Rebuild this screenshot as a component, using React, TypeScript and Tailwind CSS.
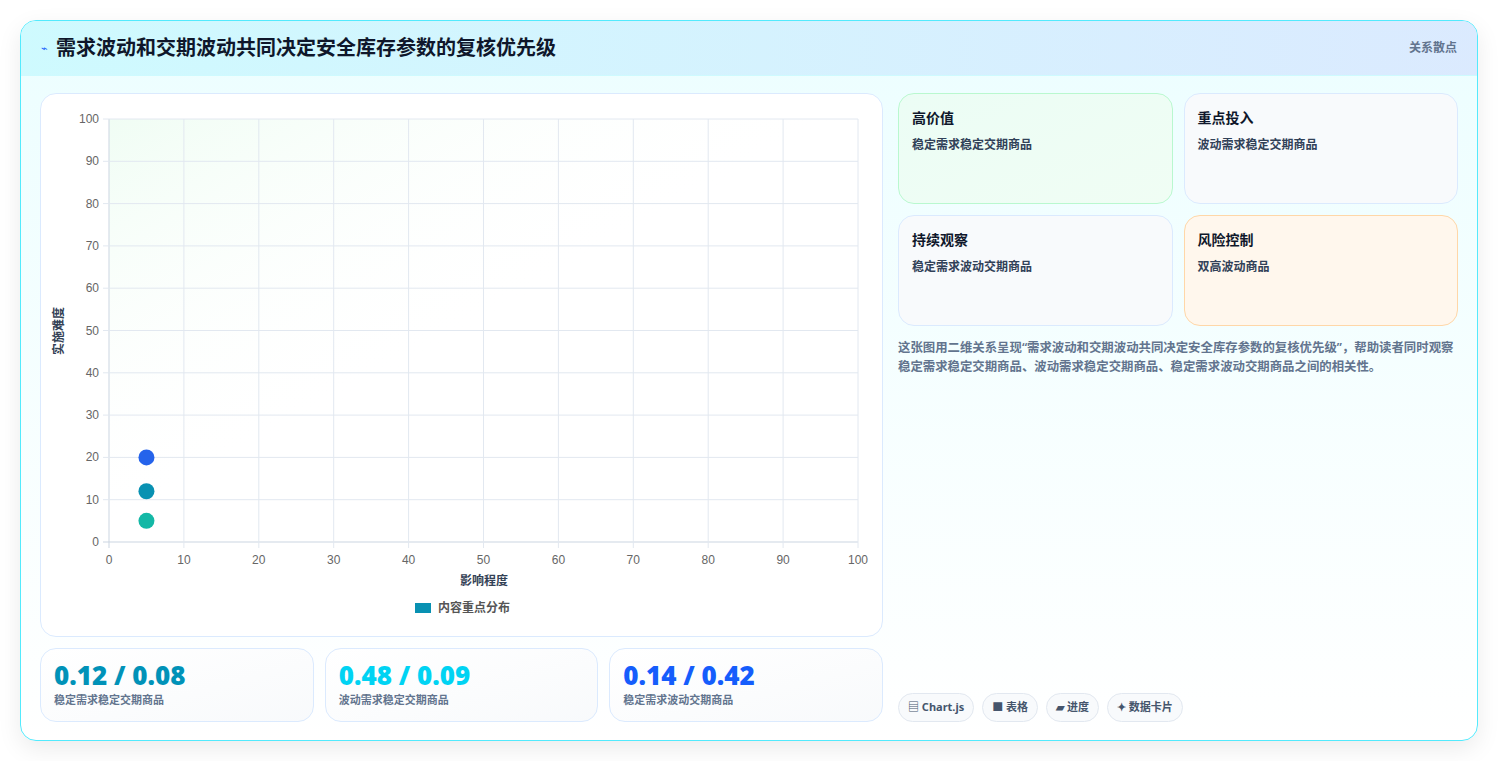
import React from "react";

const font = { fontFamily: '"Noto Sans", "Noto Sans CJK SC", sans-serif' };

function Chart() {
  const x0 = 68, x1 = 817, yTop = 25, yBot = 448;
  const sx = (v: number) => x0 + ((x1 - x0) * v) / 100;
  const sy = (v: number) => yBot - ((yBot - yTop) * v) / 100;
  const ticks = [0, 10, 20, 30, 40, 50, 60, 70, 80, 90, 100];
  const pts = [
    { y: 20, c: "#2563eb" },
    { y: 12, c: "#0891b2" },
    { y: 5, c: "#14b8a6" },
  ];
  return (
    <svg width="842" height="541" className="block">
      <defs>
        <linearGradient id="g" x1="0" y1="0" x2="1" y2="1">
          <stop offset="0" stopColor="#f0fdf4" />
          <stop offset="0.5" stopColor="#ffffff" stopOpacity="0" />
        </linearGradient>
      </defs>
      <rect x={x0} y={yTop} width={x1 - x0} height={yBot - yTop} fill="url(#g)" />
      {ticks.map((t) => (
        <g key={t}>
          <line x1={sx(t)} x2={sx(t)} y1={yTop} y2={yBot + 6} stroke={t === 0 ? "#cbd5e1" : "#e2e8f0"} />
          <line x1={x0 - 6} x2={x1} y1={sy(t)} y2={sy(t)} stroke={t === 0 ? "#cbd5e1" : "#e2e8f0"} />
          <text x={sx(t)} y={yBot + 22} fontSize="12" fill="#666" textAnchor="middle" fontFamily="Liberation Sans, sans-serif">{t}</text>
          <text x={x0 - 10} y={sy(t) + 4} fontSize="12" fill="#666" textAnchor="end" fontFamily="Liberation Sans, sans-serif">{t}</text>
        </g>
      ))}
      {pts.map((p, i) => (
        <circle key={i} cx={sx(5)} cy={sy(p.y)} r="8" fill={p.c} />
      ))}
      <text x="22" y="237" fontSize="12" fontWeight="700" fill="#334155" textAnchor="middle" transform="rotate(-90 22 237)" style={font}>实施难度</text>
      <text x="443" y="491" fontSize="12" fontWeight="700" fill="#334155" textAnchor="middle" style={font}>影响程度</text>
      <rect x="374" y="509" width="16" height="10" fill="#0891b2" />
      <text x="397" y="518" fontSize="12" fontWeight="700" fill="#555" style={font}>内容重点分布</text>
    </svg>
  );
}

function Quad({ title, sub, cls }: { title: string; sub: string; cls: string }) {
  return (
    <div className={`h-[111px] rounded-2xl border px-[13px] pt-[13px] ${cls}`}>
      <div className="text-[14px] font-bold text-slate-900">{title}</div>
      <div className="mt-[8px] text-[12px] font-semibold text-slate-700">{sub}</div>
    </div>
  );
}

function Stat({ v, label, color }: { v: string; label: string; color: string }) {
  return (
    <div className="h-[74px] rounded-2xl border border-blue-100 bg-gradient-to-br from-white to-slate-50 px-[13px] pt-[9px]">
      <div className={`text-[26px] font-black leading-[34px] ${color}`}>{v}</div>
      <div className="text-[11px] font-semibold text-slate-500">{label}</div>
    </div>
  );
}

export default function App() {
  return (
    <div className="min-h-screen bg-white px-[20px] pt-[20px]" style={font}>
      <div className="overflow-hidden rounded-2xl border border-cyan-300 bg-gradient-to-b from-cyan-50 to-white shadow-[0_8px_24px_rgba(0,0,0,0.08)]">
        <div className="flex h-[55px] items-center justify-between border-b border-cyan-100 bg-gradient-to-r from-cyan-100 to-blue-100 px-[20px]">
          <div className="flex items-center gap-[8px]">
            <span className="text-[11px] text-blue-600">⌁</span>
            <h1 className="text-[20px] font-bold text-slate-900">需求波动和交期波动共同决定安全库存参数的复核优先级</h1>
          </div>
          <span className="text-[12px] font-semibold text-slate-500">关系散点</span>
        </div>
        <div className="flex gap-[15px] px-[19px] pb-[18px] pt-[17px]">
          <div className="flex w-[843px] flex-col gap-[11px]">
            <div className="h-[544px] rounded-2xl border border-blue-100 bg-white">
              <Chart />
            </div>
            <div className="grid grid-cols-3 gap-[11px]">
              <Stat v="0.12 / 0.08" label="稳定需求稳定交期商品" color="text-cyan-600" />
              <Stat v="0.48 / 0.09" label="波动需求稳定交期商品" color="text-cyan-400" />
              <Stat v="0.14 / 0.42" label="稳定需求波动交期商品" color="text-blue-600" />
            </div>
          </div>
          <div className="flex flex-1 flex-col">
            <div className="grid grid-cols-2 gap-[11px]">
              <Quad title="高价值" sub="稳定需求稳定交期商品" cls="border-green-200 bg-gradient-to-br from-emerald-50 to-green-50" />
              <Quad title="重点投入" sub="波动需求稳定交期商品" cls="border-blue-100 bg-slate-50" />
              <Quad title="持续观察" sub="稳定需求波动交期商品" cls="border-blue-100 bg-slate-50" />
              <Quad title="风险控制" sub="双高波动商品" cls="border-orange-200 bg-orange-50" />
            </div>
            <p className="mt-[12px] text-[12.4px] font-semibold leading-[19px] text-slate-500">
              这张图用二维关系呈现“需求波动和交期波动共同决定安全库存参数的复核优先级”，帮助读者同时观察稳定需求稳定交期商品、波动需求稳定交期商品、稳定需求波动交期商品之间的相关性。
            </p>
            <div className="mt-auto flex gap-[8px]">
              {["▤ Chart.js", "■ 表格", "▰ 进度", "✦ 数据卡片"].map((t) => (
                <span key={t} className="flex h-[29px] items-center rounded-full border border-slate-200 bg-slate-50 px-[9px] text-[11px] font-bold text-slate-600">{t}</span>
              ))}
            </div>
          </div>
        </div>
      </div>
    </div>
  );
}
